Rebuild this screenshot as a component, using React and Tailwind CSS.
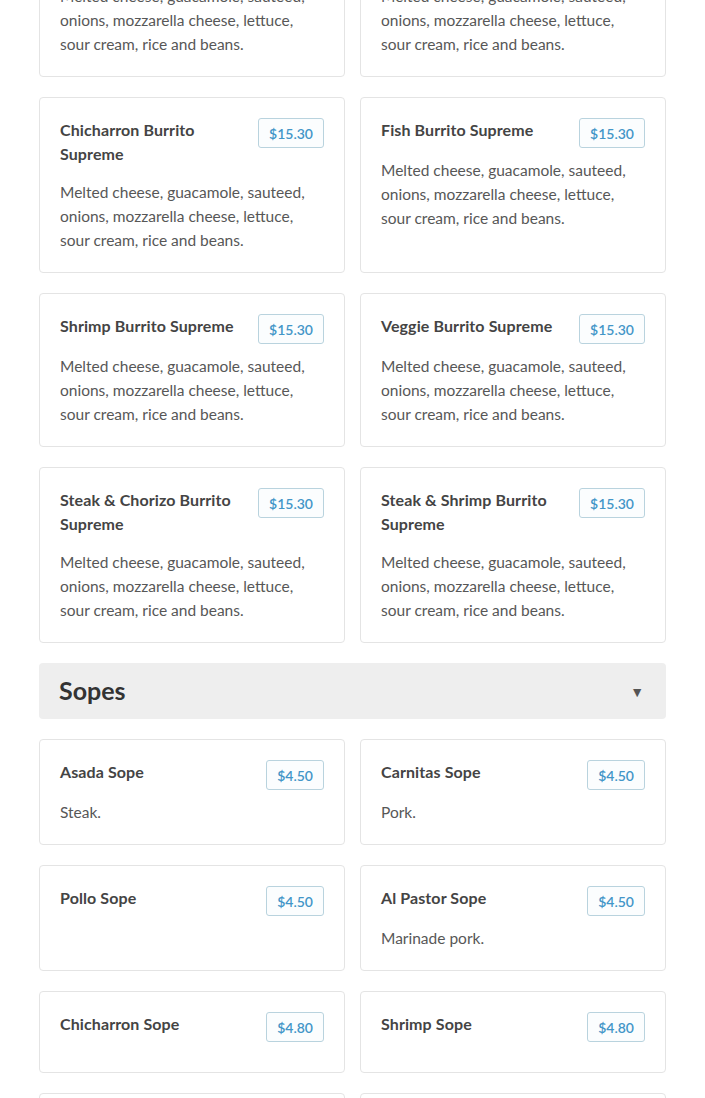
import React from "react";

const DESC = "Melted cheese, guacamole, sauteed, onions, mozzarella cheese, lettuce, sour cream, rice and beans.";

const burritos = [
  ["Pollo Burrito Supreme", "$15.30", DESC],
  ["Asada Burrito Supreme", "$15.30", DESC],
  ["Chicharron Burrito Supreme", "$15.30", DESC],
  ["Fish Burrito Supreme", "$15.30", DESC],
  ["Shrimp Burrito Supreme", "$15.30", DESC],
  ["Veggie Burrito Supreme", "$15.30", DESC],
  ["Steak & Chorizo Burrito Supreme", "$15.30", DESC],
  ["Steak & Shrimp Burrito Supreme", "$15.30", DESC],
];

const sopes = [
  ["Asada Sope", "$4.50", "Steak."],
  ["Carnitas Sope", "$4.50", "Pork."],
  ["Pollo Sope", "$4.50", ""],
  ["Al Pastor Sope", "$4.50", "Marinade pork."],
  ["Chicharron Sope", "$4.80", ""],
  ["Shrimp Sope", "$4.80", ""],
  ["Steak & Chorizo Sope", "$4.80", "Steak and chorizo."],
  ["Veggie Sope", "$4.50", "Vegetables."],
];

function Card({ title, price, desc }) {
  return (
    <div className="border border-[#e4e4e4] rounded-[4px] bg-white p-5">
      <div className="flex items-start justify-between gap-4">
        <h5 className="text-[16px] leading-6 font-bold text-[#444444] mb-[14px] tracking-[0.1px]">{title}</h5>
        <span className="shrink-0 h-[30px] px-[10px] flex items-center border border-[#b9d3de] rounded-[3px] bg-[#fbfdfe] text-[14px] font-semibold text-[#4396c8] mb-[10px]">
          {price}
        </span>
      </div>
      {desc ? (
        <p className="text-[15.5px] leading-6 text-[#575757]">{desc}</p>
      ) : null}
    </div>
  );
}

export default function App() {
  return (
    <div
      className="h-[1098px] overflow-hidden bg-white"
      style={{ fontFamily: "Lato, 'Open Sans', 'Liberation Sans', sans-serif" }}
    >
      <div className="mx-[39px] mt-[-77px]">
        <div className="grid grid-cols-2 gap-x-[15px] gap-y-5">
          {burritos.map(([t, p, d]) => (
            <Card key={t} title={t} price={p} desc={d} />
          ))}
        </div>
        <div className="mt-5 h-14 rounded-[4px] bg-[#eeeeee] flex items-center justify-between pl-5 pr-[22px]">
          <h3 className="text-[25px] font-bold text-[#333333]">Sopes</h3>
          <span className="text-[14px] text-[#555555]">▼</span>
        </div>
        <div className="mt-5 grid grid-cols-2 gap-x-[15px] gap-y-5">
          {sopes.map(([t, p, d]) => (
            <Card key={t} title={t} price={p} desc={d} />
          ))}
        </div>
      </div>
    </div>
  );
}
